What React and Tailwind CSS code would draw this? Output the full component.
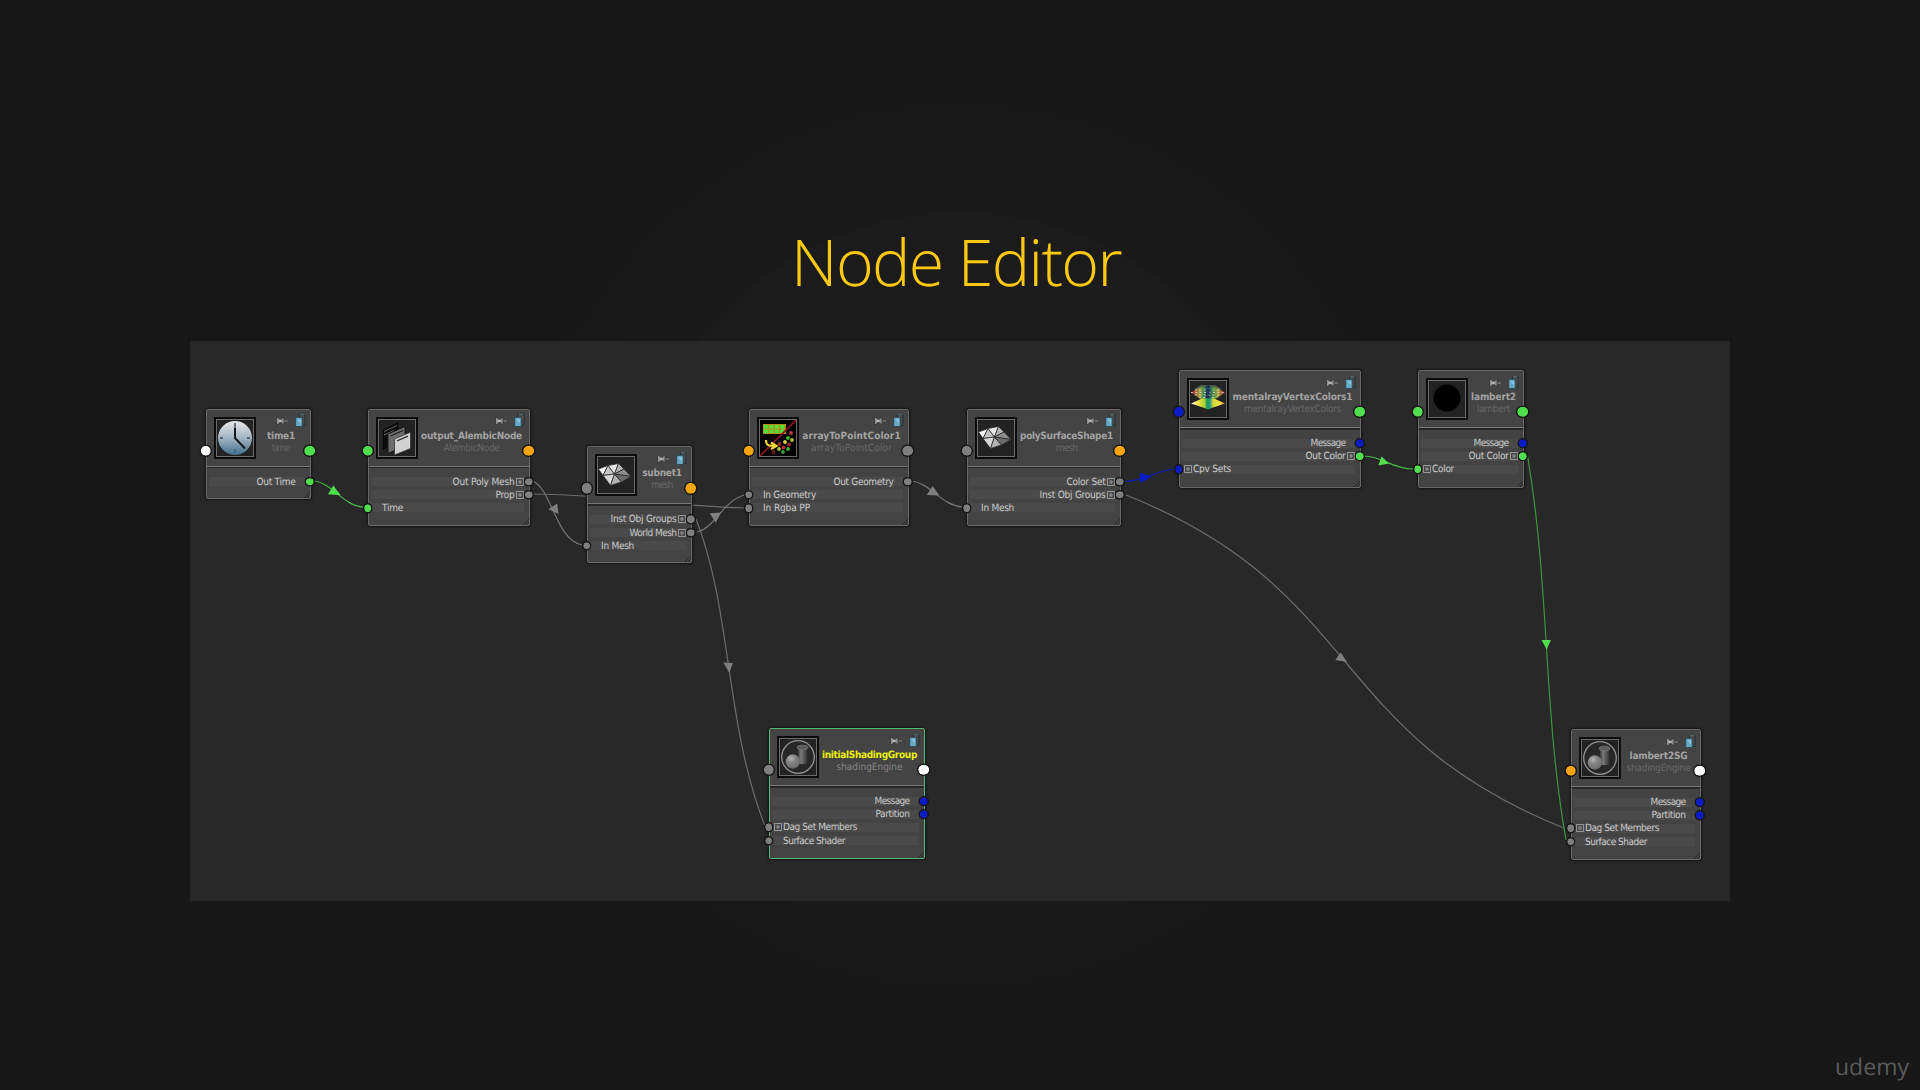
import React, { useLayoutEffect, useRef, useState } from "react";

const PORT = {
  white: "bg-white",
  green: "bg-[#50de4e]",
  orange: "bg-[#f5a50a]",
  gray: "bg-[#7f7f7f]",
  blue: "bg-[#0c1cc4]",
};

// Text whose tracking is adjusted so that it spans the given width.
function Fit({ w, className = "", children }) {
  const ref = useRef(null);
  const [gap, setGap] = useState(0);
  useLayoutEffect(() => {
    const el = ref.current;
    el.style.letterSpacing = "0px";
    const natural = el.getBoundingClientRect().width;
    setGap((w - natural) / children.length);
    el.style.letterSpacing = `${(w - natural) / children.length}px`;
  }, [w, children]);
  return (
    <span
      ref={ref}
      className={`inline-block whitespace-pre [text-rendering:geometricPrecision] ${className}`}
      style={{ letterSpacing: `${gap}px` }}
    >
      {children}
    </span>
  );
}

function Clock() {
  return (
    <svg viewBox="0 0 36 36" className="size-9">
      <defs>
        <linearGradient id="clock" x1="0" y1="0" x2="0" y2="1">
          <stop offset="0" stopColor="#e6e8ea" />
          <stop offset="0.5" stopColor="#a3b4c2" />
          <stop offset="1" stopColor="#416f8d" />
        </linearGradient>
      </defs>
      <circle cx="18" cy="18" r="17" fill="url(#clock)" />
      <path d="M18 3v4M18 29v4M3 18h3M30 18h3" stroke="#53677a" strokeWidth="1.8" />
      <path d="M18 7.5V18l10 10.5" fill="none" stroke="#151b22" strokeWidth="2" />
    </svg>
  );
}

function Sheets() {
  return (
    <svg viewBox="0 0 36 36" className="size-9">
      <path d="M3 9 20 1v22L3 31z" fill="#0c0c0c" stroke="#333" strokeWidth=".6" />
      <path d="M5 11.500 18 5.500M5 15l10-4.500" stroke="#666" strokeWidth="1" />
      <path d="M9 14 26 6.500V26L9 33.500z" fill="#6e6e6e" stroke="#161616" strokeWidth="1" />
      <path d="M11.500 16 24 10.500" stroke="#1c1c1c" strokeWidth="1.2" />
      <path d="M15.500 19 31.500 12.200V28.500L15.500 35z" fill="#d2d2d2" stroke="#333" strokeWidth=".8" />
      <path d="M18 20.800 29 16.200" stroke="#333" strokeWidth="1.3" />
    </svg>
  );
}

function Mesh() {
  return (
    <svg viewBox="1 0 36 36" className="size-9">
      <g stroke="#2e2e2e" strokeWidth=".8" strokeLinejoin="round">
        <path d="M1.500 12 11 8.500 6 18.500z" fill="#f4f4f4" />
        <path d="M11 8.500 17.500 17 6 18.500z" fill="#c4c4c4" />
        <path d="M11 8.500 21.500 6.500 17.500 17z" fill="#e6e6e6" />
        <path d="M21.500 6.500 27 12 17.500 17z" fill="#b4b4b4" />
        <path d="M27 12 34 19.500 17.500 17z" fill="#8d8d8d" />
        <path d="M6 18.500 17.500 17 13.500 28.500z" fill="#d6d6d6" />
        <path d="M17.500 17 24.500 25 13.500 28.500z" fill="#b2b2b2" />
        <path d="M17.500 17 34 19.500 24.500 25z" fill="#6b6b6b" />
      </g>
    </svg>
  );
}

function ArrayColor() {
  const cells = [5, 10.500, 16, 21.500];
  const dots = [
    [31, 13, "#c93636"], [28, 18, "#34b82f"], [32, 20, "#b6bd37"], [25, 22, "#d6d23c"],
    [29, 24.500, "#a02525"], [19.500, 24, "#a02525"], [19, 29, "#b9bf42"], [23.500, 27.500, "#b72c2c"],
    [28, 29, "#34b82f"], [23, 32, "#34a52f"], [13.500, 32, "#6d1818"],
  ];
  return (
    <svg viewBox="0 0 36 36" className="size-9 bg-black">
      <rect x="3" y="4" width="23" height="10" fill="#b8901c" />
      {cells.map((x) => (
        <g key={x} fill="#4fe03a">
          <rect x={x - 1.200} y="5" width="4" height="3.600" />
          <rect x={x - 1.200} y="9.600" width="4" height="3.600" />
        </g>
      ))}
      <path d="M0 36 36 0" stroke="#8e1420" strokeWidth="1.6" />
      <path d="M6 20c0 5 2 6 9 6M11 22.500l5.500 3.500-5.500 3" fill="none" stroke="#f3d83a" strokeWidth="2.200" />
      {dots.map(([x, y, c]) => (
        <circle key={`${x}-${y}`} cx={x} cy={y} r="1.900" fill={c} />
      ))}
    </svg>
  );
}

function VertexColors() {
  return (
    <svg viewBox="0 0 36 36" className="size-9">
      <defs>
        <linearGradient id="floor">
          <stop offset="0" stopColor="#fff" />
          <stop offset=".22" stopColor="#f1e03a" />
          <stop offset=".4" stopColor="#a9cf38" />
          <stop offset=".47" stopColor="#1d9a58" />
          <stop offset=".55" stopColor="#1f9a83" />
          <stop offset=".66" stopColor="#d8d838" />
          <stop offset=".85" stopColor="#efe24a" />
          <stop offset="1" stopColor="#e8912c" />
        </linearGradient>
        <linearGradient id="dome">
          <stop offset="0" stopColor="#b01f2c" />
          <stop offset=".12" stopColor="#a7553a" />
          <stop offset=".25" stopColor="#a7a33a" />
          <stop offset=".38" stopColor="#3d8a4a" />
          <stop offset=".5" stopColor="#22396a" />
          <stop offset=".62" stopColor="#3d8a4a" />
          <stop offset=".8" stopColor="#a7a33a" />
          <stop offset="1" stopColor="#b01f2c" />
        </linearGradient>
      </defs>
      <path d="M5 8.500 11 4.800h14l6 3.700" fill="none" stroke="#5f6e62" strokeWidth="1.200" />
      <path d="M1 11.500 7 8 12 5.500h12l5 2.500 6 3.500-5 3.500-5 3.200H11L6 15z" fill="url(#dome)" />
      <path d="M5 9h26M1 11.500h34M5 14h26M9 16.500h18" stroke="#d4d4d4" strokeWidth=".9" strokeDasharray="1.800 2.600" />
      <path d="M1 22.500 12 17.500h12l11 5L23 26.500 18 28.500l-5-2z" fill="url(#floor)" />
      <path d="M18 4.500v12.500" stroke="#1a2c56" strokeWidth="3.500" strokeDasharray="2.400 1" />
    </svg>
  );
}

function BlackBall() {
  return (
    <svg viewBox="0 0 36 36" className="size-9">
      <circle cx="18" cy="17" r="13.500" fill="#000" />
    </svg>
  );
}

function Shading() {
  return (
    <svg viewBox="0 0 36 36" className="size-9">
      <defs>
        <radialGradient id="ball" cx=".38" cy=".3" r=".75">
          <stop offset="0" stopColor="#b5b5b5" />
          <stop offset=".4" stopColor="#848484" />
          <stop offset="1" stopColor="#6a6a6a" />
        </radialGradient>
        <linearGradient id="tube">
          <stop offset="0" stopColor="#2c2c2c" />
          <stop offset=".35" stopColor="#7a7a7a" />
          <stop offset="1" stopColor="#303030" />
        </linearGradient>
      </defs>
      <circle cx="18" cy="18" r="16.300" fill="#272727" stroke="#929292" strokeWidth="1.300" />
      <path d="M17.500 9v14c0 3 10 3 10 0V9z" fill="url(#tube)" />
      <ellipse cx="22.500" cy="8.500" rx="5.300" ry="2.300" fill="#5c5c5c" stroke="#888" strokeWidth=".6" />
      <circle cx="12.800" cy="22.500" r="7.200" fill="url(#ball)" />
    </svg>
  );
}

const ICONS = { clock: Clock, sheets: Sheets, mesh: Mesh, array: ArrayColor, vertex: VertexColors, ball: BlackBall, shading: Shading };

function Pin() {
  return (
    <svg viewBox="0 0 12 8" className="h-2 w-3">
      <path d="M.5.5h1.700l1.300 1.600h2L7.200.500H8v7h-.8L5.500 5.700h-2L2.200 7.500H.5z" fill="#8f8f8f" stroke="#2c2c2c" strokeWidth=".7" />
      <path d="M2.500 4h3" stroke="#d0d0d0" strokeWidth="1.200" />
      <path d="M8.200 4H12" stroke="#898989" strokeWidth="1" />
    </svg>
  );
}

function Badge() {
  return (
    <svg viewBox="0 0 11 14" className="h-3.5 w-[11px]">
      <path d="M4.500 3V1H10v10.500H7.500" fill="#4a4a4a" stroke="#2b3438" strokeWidth="1.200" />
      <path d="M5 .800h4" stroke="#6b8793" strokeWidth=".8" />
      <rect x=".8" y="3.300" width="6.400" height="9.200" fill="#67aac6" stroke="#28414c" strokeWidth=".8" />
      <path d="M3 6h2.200v2.500" fill="none" stroke="#a4d6ea" strokeWidth="1" />
    </svg>
  );
}

function Expand() {
  return (
    <svg viewBox="0 0 8 8" className="size-2 shrink-0">
      <path d="M.5.5h7v7h-7zM4 2v4M2 4h4" fill="none" stroke="#969696" strokeWidth="1" />
    </svg>
  );
}

function Dot({ color, big, side }) {
  const size = big ? "size-[12.400px] border-[1.300px]" : "size-[9.600px] border-[1.100px]";
  const inPlace = big ? "left-0 -translate-x-1/2" : "left-[-1.500px] -translate-x-1/2";
  const outPlace = big ? "right-[1.500px] translate-x-1/2" : "right-0 translate-x-1/2";
  return (
    <span className={`absolute top-1/2 -translate-y-1/2 rounded-full border-[#161616] bg-clip-padding shadow-[0_0_1px_#111] ${size} ${side === "in" ? inPlace : outPlace} ${PORT[color]}`} />
  );
}

function Row({ side, label, w, color, plus }) {
  const out = side === "out";
  return (
    <div className="relative flex h-[13.200px] items-center">
      <div className={`flex h-[9px] w-full items-center bg-[#4a4a4a] ${out ? "mr-[5px] ml-[2px] justify-end" : "mr-[5px] ml-[1px]"}`}>
        <div className={`flex items-center gap-[1.500px] ${out ? "" : "pl-[2.500px]"}`}>
          {!out && (plus ? <Expand /> : <span className="w-2" />)}
          <Fit w={w} className="pt-px text-[10px] leading-[13px] text-[#cbcbcb]">{label}</Fit>
          {out && (plus ? <Expand /> : <span className="w-2" />)}
        </div>
      </div>
      <Dot color={color} side={side} />
    </div>
  );
}

function Node({ n }) {
  const Icon = ICONS[n.icon];
  return (
    <div className="absolute" style={{ left: n.x, top: n.y, width: n.w, height: n.h }}>
      <div
        className={`relative flex h-full flex-col rounded-[2px] bg-[#434343] shadow-[0_0_2px_1px_#161616] ${
          n.selected ? "border-[1.500px] border-[#50b878]" : "border border-[#686868]"
        }`}
      >
        <div className="flex h-[57px] shrink-0 border-b border-[#787878] bg-[#444444]">
          <div className="mt-[7px] ml-[7px] grid size-[42px] shrink-0 place-items-center overflow-hidden border-2 border-[#0c0c0c] bg-[#222] shadow-[inset_0_0_0_1px_#6b6b6b]">
            <Icon />
          </div>
          <div className="flex grow flex-col items-center pr-1">
            <div className="mt-[4px] flex h-[15px] items-center gap-[7px] self-end">
              <Pin />
              <Badge />
            </div>
            <div className="flex w-0 justify-center pt-px">
              <Fit w={n.tw} className={`text-[10px] leading-[14px] font-bold ${n.selected ? "text-[#ecf00a]" : "text-[#a2a2a2]"}`}>
                {n.title}
              </Fit>
            </div>
            <div className={`flex w-0 justify-center ${n.selected ? "text-[#858585]" : "text-[#686868]"}`}>
              <Fit w={n.sw} className="text-[10px] leading-[9px]">{n.sub}</Fit>
            </div>
          </div>
        </div>
        <div className="h-[1.500px] shrink-0 bg-[#262626]" />
        <div className="pt-[7px]">
          {n.rows.map((r) => (
            <Row key={r[1]} side={r[0]} label={r[1]} w={r[2]} color={r[3]} plus={r[4]} />
          ))}
        </div>
        <svg viewBox="0 0 6 6" className="absolute right-0 bottom-0 size-1.5">
          <path d="M0 6 6 0M3 6 6 3" stroke="#222" strokeWidth=".9" />
        </svg>
      </div>
      <div className="absolute inset-x-0 top-[36px] h-3">
        <Dot big color={n.inPort} side="in" />
        <Dot big color={n.outPort} side="out" />
      </div>
    </div>
  );
}

const NODES = [
  { x: 16, y: 67.5, w: 105, h: 90.5, icon: "clock", title: "time1", tw: 28, sub: "time", sw: 18, inPort: "white", outPort: "green",
    rows: [["out", "Out Time", 39, "green"]] },
  { x: 178, y: 67.5, w: 162, h: 117.5, icon: "sheets", title: "output_AlembicNode", tw: 101, sub: "AlembicNode", sw: 56, inPort: "green", outPort: "orange",
    rows: [["out", "Out Poly Mesh", 62, "gray", true], ["out", "Prop", 19, "gray", true], ["in", "Time", 21, "green"]] },
  { x: 397, y: 105.3, w: 105, h: 117, icon: "mesh", title: "subnet1", tw: 39.5, sub: "mesh", sw: 21.5, inPort: "gray", outPort: "orange",
    rows: [["out", "Inst Obj Groups", 66, "gray", true], ["out", "World Mesh", 47, "gray", true], ["in", "In Mesh", 33, "gray"]] },
  { x: 559, y: 67.5, w: 160, h: 117.5, icon: "array", title: "arrayToPointColor1", tw: 98.5, sub: "arrayToPointColor", sw: 81, inPort: "orange", outPort: "gray",
    rows: [["out", "Out Geometry", 60, "gray"], ["in", "In Geometry", 53, "gray"], ["in", "In Rgba PP", 47, "gray"]] },
  { x: 777, y: 67.5, w: 154, h: 117.5, icon: "mesh", title: "polySurfaceShape1", tw: 93, sub: "mesh", sw: 21.5, inPort: "gray", outPort: "orange",
    rows: [["out", "Color Set", 39, "gray", true], ["out", "Inst Obj Groups", 66, "gray", true], ["in", "In Mesh", 33, "gray"]] },
  { x: 989, y: 29, w: 182, h: 118, icon: "vertex", title: "mentalrayVertexColors1", tw: 120, sub: "mentalrayVertexColors", sw: 97, inPort: "blue", outPort: "green",
    rows: [["out", "Message", 35, "blue"], ["out", "Out Color", 40, "green", true], ["in", "Cpv Sets", 38, "blue", true]] },
  { x: 1228, y: 29, w: 106, h: 118, icon: "ball", title: "lambert2", tw: 45, sub: "lambert", sw: 33, inPort: "green", outPort: "green",
    rows: [["out", "Message", 35, "blue"], ["out", "Out Color", 40, "green", true], ["in", "Color", 22, "green", true]] },
  { x: 579, y: 387, w: 156, h: 131, icon: "shading", title: "initialShadingGroup", tw: 95, sub: "shadingEngine", sw: 66, inPort: "gray", outPort: "white", selected: true,
    rows: [["out", "Message", 35, "blue"], ["out", "Partition", 34, "blue"], ["in", "Dag Set Members", 74, "gray", true], ["in", "Surface Shader", 62, "gray"]] },
  { x: 1381, y: 388, w: 130, h: 131, icon: "shading", title: "lambert2SG", tw: 58, sub: "shadingEngine", sw: 64, inPort: "orange", outPort: "white",
    rows: [["out", "Message", 35, "blue"], ["out", "Partition", 34, "blue"], ["in", "Dag Set Members", 74, "gray", true], ["in", "Surface Shader", 62, "gray"]] },
];

const WIRES = [
  ["M315 481C331 483 345 507 364 507", "#45b844", "333.300,485.500 340.700,495.300 328,494.300", "#50de4e"],
  ["M533 481C552 490 556 540 582 545", "#767676", "548.300,509.300 557.300,503.500 558.500,514", "#7f7f7f"],
  ["M533 494C600 494 680 507 744 508", "#6c6c6c"],
  ["M697 532C715 528 722 502 744 495", "#767676", "709.800,513.300 721,512.500 715.700,522.700", "#7f7f7f"],
  ["M696 519C732 610 725 725 765 826", "#6c6c6c", "723.300,662.500 732.900,663 729.300,672.700", "#7f7f7f"],
  ["M912 481C932 484 940 505 963 507", "#767676", "932.700,486 939.300,495.500 926.700,495", "#7f7f7f"],
  ["M1125 481.500C1143 481 1155 471 1174 469", "#0d1bb4", "1140,472.700 1151.700,476.700 1140,483", "#0c1cc4"],
  ["M1126 495C1364 590 1326 733 1564 828", "#6e6e6e", "1340.700,652.500 1347,662 1335.300,660", "#7f7f7f"],
  ["M1364 456C1382 456 1392 469 1413 469", "#45b844", "1381.500,456.500 1389,463.500 1378.300,465.500", "#50de4e"],
  ["M1527.700 456.500C1550 590 1543 710 1566 840", "#3c953b", "1541.500,640 1550.900,640 1546.700,649.500", "#50de4e"],
];

export default function App() {
  return (
    <div className="relative flex h-[1090px] w-[1920px] flex-col items-center overflow-hidden bg-[#171717] bg-[radial-gradient(circle_at_960px_545px,#1c1c1c_0,#1b1b1b_330px,#191919_334px,#181818_450px,#171717_454px)] [font-family:'DejaVu_Sans_Condensed','DejaVu_Sans',sans-serif] [font-stretch:condensed]">
      <h1 className="mt-[217px] mr-[8px] flex h-[124px] [font-family:'Open_Sans',sans-serif] text-[64.500px] leading-[88px] font-light text-[#fcc812] [font-stretch:normal]">
        <Fit w={330}>Node Editor</Fit>
      </h1>
      <main className="relative h-[560px] w-[1540px] shrink-0 bg-[#282828]">
        <svg viewBox="190 341 1540 560" className="absolute inset-0 h-full w-full">
          {WIRES.map(([d, stroke, tip, fill]) => (
            <g key={d}>
              <path d={d} fill="none" stroke={stroke} strokeWidth="1.200" />
              {tip && <polygon points={tip} fill={fill} />}
            </g>
          ))}
        </svg>
        {NODES.map((n) => (
          <Node key={n.title} n={n} />
        ))}
      </main>
      <footer className="mt-auto mb-[8px] flex self-end pr-[11px] [font-family:'Open_Sans',sans-serif] text-[23px] leading-8 text-[#5b5b5b] [font-stretch:normal]">
        <Fit w={74}>udemy</Fit>
      </footer>
    </div>
  );
}
